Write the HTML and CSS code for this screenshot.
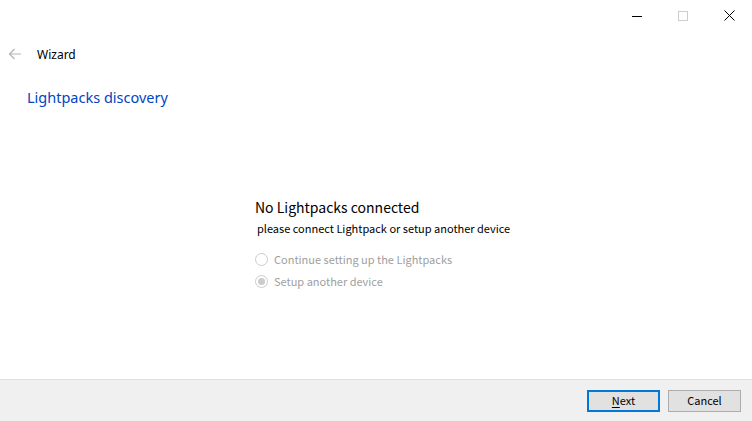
FILE: index.html
```html
<!DOCTYPE html>
<html>
<head>
<meta charset="utf-8">
<link rel="stylesheet" href="styles.css">
</head>
<body>
<div class="window">
  <div class="titlebar">
    <div class="ctl">
      <svg width="10" height="10" viewBox="0 0 10 10"><path d="M0 5.5H10" stroke="#000" stroke-width="1"/></svg>
    </div>
    <div class="ctl">
      <svg width="10" height="10" viewBox="0 0 10 10"><rect x="0.5" y="0.5" width="9" height="9" fill="none" stroke="#ccc" stroke-width="1"/></svg>
    </div>
    <div class="ctl">
      <svg width="11" height="11" viewBox="0 0 11 11"><path d="M0.5 0.5L10.5 10.5M10.5 0.5L0.5 10.5" stroke="#000" stroke-width="1"/></svg>
    </div>
  </div>
  <div class="nav">
    <svg class="back" width="14" height="12" viewBox="0 0 14 12"><path d="M13 6H1.5M6.5 1L1.5 6L6.5 11" fill="none" stroke="#b4b4b4" stroke-width="1.2"/></svg>
    <span class="nav-title">Wizard</span>
  </div>
  <h1 class="page-title">Lightpacks discovery</h1>
  <main class="main">
    <div class="panel">
      <div class="headline">No Lightpacks connected</div>
      <div class="sub">please connect Lightpack or setup another device</div>
      <div class="options">
        <label class="opt"><span class="radio"></span>Continue setting up the Lightpacks</label>
        <label class="opt"><span class="radio checked"></span>Setup another device</label>
      </div>
    </div>
  </main>
  <footer class="footer">
    <button class="btn default"><u>N</u>ext</button>
    <button class="btn">Cancel</button>
  </footer>
</div>
</body>
</html>
```

FILE: styles.css
```css
* { box-sizing: border-box; }
html, body { margin: 0; padding: 0; }
body {
  width: 752px;
  height: 421px;
  overflow: hidden;
  background: #fff;
  font-family: "Noto Sans", "Open Sans", sans-serif;
  color: #000;
}
.window {
  display: flex;
  flex-direction: column;
  height: 421px;
}
.titlebar {
  height: 31px;
  display: flex;
  justify-content: flex-end;
  flex-shrink: 0;
}
.ctl {
  width: 46px;
  height: 31px;
  display: flex;
  align-items: center;
  justify-content: center;
}
.nav {
  height: 46px;
  display: flex;
  align-items: center;
  flex-shrink: 0;
}
.back { margin-left: 8px; }
.nav-title {
  margin-left: 15px;
  font-size: 12px;
  color: #000;
}
.page-title {
  margin: 0 0 0 27px;
  font-size: 14.5px;
  font-weight: 400;
  color: #0045c2;
  height: 40px;
  line-height: 40px;
}
.main {
  flex: 1;
  padding: 81px 0 0 255px;
}
.headline {
  font-family: "Noto Sans CJK JP", "Noto Sans", sans-serif;
  font-size: 14px;
  line-height: 18px;
}
.sub {
  font-family: "Noto Sans CJK JP", "Noto Sans", sans-serif;
  font-size: 11px;
  line-height: 16px;
  margin-top: 4px;
  padding-left: 2px;
}
.options {
  margin-top: 15px;
  display: flex;
  flex-direction: column;
  gap: 6px;
}
.opt {
  display: flex;
  align-items: center;
  font-family: "Noto Sans CJK JP", "Noto Sans", sans-serif;
  font-size: 11px;
  line-height: 16px;
  color: #a0a0a0;
}
.radio {
  width: 13px;
  height: 13px;
  border: 1px solid #cccccc;
  border-radius: 50%;
  margin-right: 6px;
  display: flex;
  align-items: center;
  justify-content: center;
  background: #fff;
}
.radio.checked::after {
  content: "";
  width: 7px;
  height: 7px;
  border-radius: 50%;
  background: #cccccc;
}
.footer {
  height: 42px;
  flex-shrink: 0;
  background: #f0f0f0;
  border-top: 1px solid #dfdfdf;
  display: flex;
  justify-content: flex-end;
  align-items: center;
  gap: 8px;
  padding: 0 11px 0 0;
}
.btn {
  width: 73px;
  height: 22px;
  background: #e1e1e1;
  border: 1px solid #adadad;
  font-family: "Noto Sans CJK JP", "Noto Sans", sans-serif;
  font-size: 11px;
  line-height: 14px;
  color: #000;
  padding: 0 0 1px 0;
}
.btn.default {
  border: 2px solid #0078d7;
}
.btn u { text-underline-offset: 2px; }
```
